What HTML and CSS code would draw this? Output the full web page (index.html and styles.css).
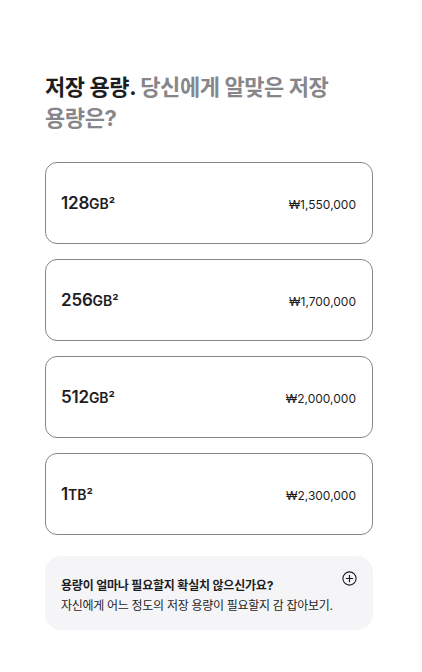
FILE: index.html
```html
<!DOCTYPE html>
<html lang="ko">
<head>
<meta charset="utf-8">
<link rel="stylesheet" href="styles.css">
</head>
<body>
<main class="page">
  <h2 class="title"><span class="title-strong">저장 용량.</span> <span class="title-muted">당신에게 알맞은 저장 용량은?</span></h2>
  <div class="options">
    <div class="option">
      <span class="size"><span class="num">128</span><span class="unit">GB²</span></span>
      <span class="price">₩1,550,000</span>
    </div>
    <div class="option">
      <span class="size"><span class="num">256</span><span class="unit">GB²</span></span>
      <span class="price">₩1,700,000</span>
    </div>
    <div class="option">
      <span class="size"><span class="num">512</span><span class="unit">GB²</span></span>
      <span class="price">₩2,000,000</span>
    </div>
    <div class="option">
      <span class="size"><span class="num">1</span><span class="unit">TB²</span></span>
      <span class="price">₩2,300,000</span>
    </div>
  </div>
  <div class="help">
    <div class="help-text">
      <p class="help-title">용량이 얼마나 필요할지 확실치 않으신가요?</p>
      <p class="help-desc">자신에게 어느 정도의 저장 용량이 필요할지 감 잡아보기.</p>
    </div>
    <svg class="plus" width="15" height="15" viewBox="0 0 15 15" aria-hidden="true">
      <circle cx="7.5" cy="7.5" r="6.6" fill="none" stroke="#1d1d1f" stroke-width="1.1"/>
      <path d="M7.5 4.3v6.4M4.3 7.5h6.4" stroke="#1d1d1f" stroke-width="1.2" stroke-linecap="round"/>
    </svg>
  </div>
</main>
</body>
</html>
```
FILE: styles.css
```css
* { box-sizing: border-box; }
html, body { margin: 0; padding: 0; background: #fff; }
body {
  font-family: "Inter", "Noto Sans CJK KR", sans-serif;
  color: #1d1d1f;
}
.page {
  width: 328px;
  margin-left: 45px;
  padding-top: 72px;
}
.title {
  margin: 0;
  font-size: 22px;
  line-height: 31px;
  font-weight: 700;
  letter-spacing: -0.4px;
  word-break: keep-all;
}
.title-strong { color: #1d1d1f; }
.title-muted { color: #86868b; }
.options {
  margin-top: 28px;
  display: flex;
  flex-direction: column;
  gap: 15px;
}
.option {
  height: 82px;
  border: 1px solid #86868b;
  border-radius: 12px;
  display: flex;
  align-items: center;
  justify-content: space-between;
  padding: 0 16px 0 15px;
}
.size {
  display: flex;
  align-items: baseline;
  font-weight: 600;
  color: #1d1d1f;
}
.num { font-size: 17px; letter-spacing: -0.2px; }
.unit { font-size: 14px; }
.price {
  font-size: 12px;
  color: #1d1d1f;
  padding-top: 2px;
}
.help {
  margin-top: 21px;
  background: #f5f5f7;
  border-radius: 16px;
  padding: 18px 16px 14px 16px;
  display: flex;
  justify-content: space-between;
  align-items: flex-start;
}
.help-text p { margin: 0; }
.help-title {
  font-size: 12px;
  line-height: 20px;
  font-weight: 700;
  letter-spacing: -0.2px;
  margin-top: 2px !important;
}
.help-desc {
  font-size: 12px;
  line-height: 20px;
  font-weight: 400;
  letter-spacing: -0.3px;
  white-space: nowrap;
}
.plus { margin-top: -3px; flex: none; }
```
